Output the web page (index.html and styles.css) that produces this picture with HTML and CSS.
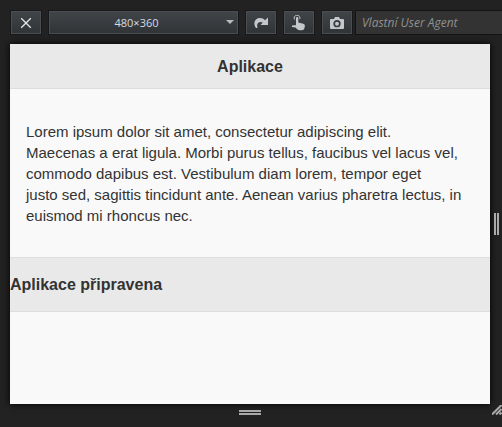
FILE: index.html
```
<!DOCTYPE html>
<html lang="cs">
<head>
    <meta charset="UTF-8">
    <meta name="viewport" content="width=device-width, initial-scale=1.0">
    <title>Aplikace</title>
    <link rel="stylesheet" href="styles.css">
</head>
<body>

<div class="toolbar">
    <button class="tool" type="button" aria-label="Zavřít">
        <svg width="16" height="16" viewBox="0 0 16 16"><path d="M3.2 3.2l9.6 9.6M12.8 3.2L3.2 12.8" fill="none" stroke="#e4e7ea" stroke-width="1.3"/></svg>
    </button>
    <div class="size">
        <select aria-label="Rozměry">
            <option>480×360</option>
        </select>
    </div>
    <button class="tool" type="button" aria-label="Otočit">
        <svg width="16" height="16" viewBox="0 0 16 16"><path d="M3 13C-.2 9 1.500 3 7 3c2.200 0 3.700.7 5 2.200L15 2.500V10H7.500l2.300-2.400C6.500 5.800 3 7.500 4.500 13z" fill="#c3c8cc"/></svg>
    </button>
    <button class="tool" type="button" aria-label="Simulovat dotyk">
        <svg width="16" height="16" viewBox="0 0 16 16"><path d="M3.500 4.500A2.900 2.900 0 1 1 8.800 4" fill="none" stroke="#c3c8cc" stroke-width="1"/><path d="M5 3c0-1.500 2.300-1.500 2.300 0v4.500l5 1.200c1.200.4 1.700 1.300 1.600 2.300l-.5 2.300c-.4 1.300-1.200 1.900-2.400 1.900H8.500c-1.200 0-1.900-.5-2.500-1.200L4.500 12.500 1 12c-.5-1 .2-1.700 1-1.700h3z" fill="#c3c8cc"/></svg>
    </button>
    <button class="tool" type="button" aria-label="Snímek obrazovky">
        <svg width="16" height="16" viewBox="0 0 16 16"><path d="M2 4h3l1-2h4l1 2h3q1 0 1 1v8q0 1-1 1H2q-1 0-1-1V5q0-1 1-1z" fill="#c3c8cc"/><circle cx="8" cy="8.700" r="2.800" fill="#c3c8cc" stroke="#383b3f" stroke-width="1.700"/></svg>
    </button>
    <input class="agent" type="text" placeholder="Vlastní User Agent" aria-label="Vlastní User Agent">
</div>

<div class="stage">
    <main class="screen">
        <header class="bar">
            <h1>Aplikace</h1>
        </header>
        <div class="content">
            <p>
                Lorem ipsum dolor sit amet, consectetur adipiscing elit.<br>
                Maecenas a erat ligula. Morbi purus tellus, faucibus vel lacus vel,<br>
                commodo dapibus est. Vestibulum diam lorem, tempor eget<br>
                justo sed, sagittis tincidunt ante. Aenean varius pharetra lectus, in<br>
                euismod mi rhoncus nec.
            </p>
        </div>
        <footer class="bar status">
            <h3>Aplikace připravena</h3>
        </footer>
    </main>
    <div class="grip-right"></div>
    <div class="grip-bottom"></div>
    <svg class="grip-corner" width="10" height="10" viewBox="0 0 10 10"><path d="M0 9.500L9.500 0M4 9.500L9.500 4M7.500 9.500l2-2" fill="none" stroke="#aaa" stroke-width="2"/></svg>
</div>

</body>
</html>
```
FILE: styles.css
```
* {
    box-sizing: border-box;
}
body {
    display: flex;
    flex-direction: column;
    height: 100vh;
    margin: 0;
    overflow: hidden;
    background: #222;
    color: #333;
    font-family: "Liberation Sans", Arial, sans-serif;
}

/* toolbar */
.toolbar {
    display: flex;
    gap: 6px;
    padding: 10px 0 9px 10px;
}
.tool,
.size select {
    height: 25px;
    border: 1px solid #18191a;
    background: linear-gradient(#414549, #303336);
    box-shadow: inset 0 0 0 1px #4a4e52;
}
.tool {
    display: flex;
    flex: none;
    align-items: center;
    justify-content: center;
    width: 32px;
    padding: 0;
}
.size {
    position: relative;
    flex: none;
    width: 191px;
}
.size select {
    display: block;
    width: 100%;
    padding: 0 14px 0 0;
    appearance: none;
    border-radius: 0;
    color: #d5dce2;
    font: 11px "Open Sans", sans-serif;
    text-align: center;
    text-align-last: center;
}
.size::after {
    content: "";
    position: absolute;
    top: 10px;
    right: 5px;
    border: 4px solid transparent;
    border-top-color: #b6bbbf;
    pointer-events: none;
}
.agent {
    flex: 1;
    min-width: 0;
    height: 25px;
    margin-left: -4px;
    padding: 0 6px;
    border: 1px solid #141414;
    border-right: 0;
    background: #333;
    color: #ccc;
    font: italic 12px "Open Sans", sans-serif;
}
.agent::placeholder {
    color: #919191;
    opacity: 1;
}

/* simulated device */
.stage {
    display: grid;
    flex: 1;
    grid-template-columns: 1fr 12px;
    grid-template-rows: 1fr 23px;
    padding-left: 10px;
}
.screen {
    background: #f9f9f9;
    box-shadow: 0 0 7px #000;
    font-size: 15px;
    line-height: 21px;
}
.bar {
    padding: 12px 0 11px;
    border-bottom: 1px solid #ddd;
    background: #e9e9e9;
}
.bar h1,
.bar h3 {
    margin: 0;
    font-size: 16px;
}
.bar h1 {
    text-align: center;
}
.content {
    padding: 16px 14px 15px 16px;
}
.content p {
    margin: 16px 0;
}
.status {
    padding: 16px 0;
    border-top: 1px solid #ddd;
}

/* resize handles */
.grip-right {
    align-self: center;
    justify-self: center;
    width: 5px;
    height: 22px;
    border: solid #aaa;
    border-width: 0 2px;
}
.grip-bottom {
    align-self: start;
    justify-self: center;
    width: 22px;
    height: 5px;
    margin-top: 6px;
    border: solid #aaa;
    border-width: 2px 0;
}
.grip-corner {
    justify-self: end;
    margin-top: 1px;
}
```
